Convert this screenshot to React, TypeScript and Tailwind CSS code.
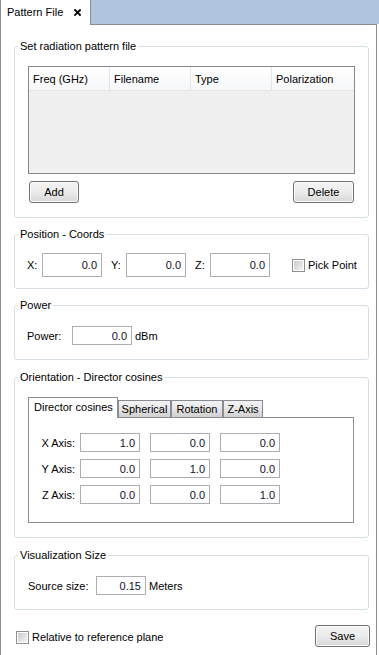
import type { ReactNode } from 'react';

// Group box in the Windows 7 style: light rounded border with the title set into it
function Group({ title, className, children }: { title: string; className?: string; children: ReactNode }) {
  return (
    <fieldset className={`rounded-[3px] border border-[#d5dfe5] p-0 m-0 min-w-0 ${className ?? ''}`}>
      <legend className="ml-[3px] px-[2px] h-[14px] leading-[14px]">{title}</legend>
      {children}
    </fieldset>
  );
}

function Field({ value, w = 'w-[60px]', h = 'h-[19px]' }: { value: string; w?: string; h?: string }) {
  return (
    <div className={`${w} ${h} shrink-0 border border-[#abadb3] bg-white flex items-center justify-end pr-[4px] text-[#10102a]`}>
      {value}
    </div>
  );
}

function Button({ label, w }: { label: string; w: string }) {
  return (
    <div
      className={`${w} h-[22px] shrink-0 rounded-[3px] border border-[#707070] bg-gradient-to-b from-[#f4f4f4] via-[#ebebeb] to-[#d8d8d8] flex items-center justify-center shadow-[inset_0_0_0_1px_#fbfbfb]`}
    >
      {label}
    </div>
  );
}

function Checkbox() {
  return (
    <div className="w-[13px] h-[13px] shrink-0 border border-[#8e8f8f] bg-white p-px">
      <div className="w-full h-full bg-gradient-to-br from-[#cbcbcb] to-[#f3f3f3]" />
    </div>
  );
}

export default function App() {
  const axes = [
    { label: 'X Axis:', values: ['1.0', '0.0', '0.0'] },
    { label: 'Y Axis:', values: ['0.0', '1.0', '0.0'] },
    { label: 'Z Axis:', values: ['0.0', '0.0', '1.0'] },
  ];

  return (
    <div className="w-[379px] h-[655px] bg-white text-[11px] leading-[14px] text-black overflow-hidden font-['Liberation_Sans',Arial,sans-serif]">
      {/* Tab strip */}
      <div className="flex h-[24px]">
        <div className="w-[91px] border-l border-r border-[#898c95] bg-white flex items-center pl-[6px] gap-[11px]">
          <span>Pattern File</span>
          <svg width="7" height="7" viewBox="0 0 7 7" className="mt-px">
            <path d="M1 1 L6 6 M6 1 L1 6" stroke="#000" strokeWidth="1.8" strokeLinecap="square" />
          </svg>
        </div>
        <div className="flex-1 bg-[#b0c4de]" />
      </div>

      {/* Panel */}
      <div className="w-[377px] h-[631px] border-l border-r border-[#898c95] flex flex-col">
        <div className="flex h-px shrink-0">
          <div className="w-[89px]" />
          <div className="flex-1 bg-[#898c95]" />
        </div>

        <div className="pl-[13px] pr-[7px] pt-[14px] flex flex-col">
          {/* Set radiation pattern file */}
          <Group title="Set radiation pattern file" className="pt-[13px] pb-[14px]">
            <div className="ml-[13px] w-[327px] h-[108px] border border-[#828790] bg-[#f0f0f0] flex flex-col">
              <div className="flex h-[24px] bg-gradient-to-b from-white to-[#f6f7f9] border-b border-[#e3e5e8]">
                {['Freq (GHz)', 'Filename', 'Type', 'Polarization'].map((h, i) => (
                  <div
                    key={h}
                    className={`flex items-center pl-[4px] ${i < 3 ? 'w-[81px] border-r border-[#e3e5e8]' : 'flex-1'}`}
                  >
                    {h}
                  </div>
                ))}
              </div>
            </div>
            <div className="mt-[7px] pl-[14px] pr-[14px] flex justify-between">
              <Button label="Add" w="w-[50px]" />
              <Button label="Delete" w="w-[61px]" />
            </div>
          </Group>

          {/* Position */}
          <Group title="Position - Coords" className="mt-[9px] pt-[12px] pb-[11px]">
            <div className="flex items-center pl-[12px]">
              <span className="w-[15px]">X:</span>
              <Field value="0.0" h="h-[24px]" />
              <span className="w-[15px] ml-[9px]">Y:</span>
              <Field value="0.0" h="h-[24px]" />
              <span className="w-[15px] ml-[9px]">Z:</span>
              <Field value="0.0" h="h-[24px]" />
              <div className="ml-[22px]">
                <Checkbox />
              </div>
              <span className="ml-[3px]">Pick Point</span>
            </div>
          </Group>

          {/* Power */}
          <Group title="Power" className="mt-[9px] pt-[14px] pb-[14px]">
            <div className="flex items-center pl-[12px]">
              <span className="w-[45px]">Power:</span>
              <Field value="0.0" />
              <span className="ml-[3px]">dBm</span>
            </div>
          </Group>

          {/* Orientation */}
          <Group title="Orientation - Director cosines" className="mt-[10px] pt-[13px] pb-[14px]">
            <div className="ml-[13px] w-[326px]">
              <div className="flex items-end h-[20px]">
                <div className="w-[90px] h-[21px] -mb-px relative z-10 bg-white border border-b-0 border-[#898c95] flex items-center pl-[5px] pb-[2px]">
                  Director cosines
                </div>
                {[
                  { t: 'Spherical', w: 'w-[53px]' },
                  { t: 'Rotation', w: 'w-[52px]' },
                  { t: 'Z-Axis', w: 'w-[40px]' },
                ].map((tab) => (
                  <div
                    key={tab.t}
                    className={`${tab.w} h-[17px] border border-b-0 border-[#898c95] bg-gradient-to-b from-[#f3f3f3] via-[#e6e6e6] to-[#cfcfcf] flex items-center justify-center`}
                  >
                    {tab.t}
                  </div>
                ))}
              </div>
              <div className="h-[106px] border border-[#898c95] bg-white pt-[15px] pl-[5px] flex flex-col gap-[7px]">
                {axes.map((row) => (
                  <div key={row.label} className="flex items-center">
                    <span className="w-[41px] text-right">{row.label}</span>
                    <div className="ml-[5px] flex gap-[10px]">
                      {row.values.map((v, i) => (
                        <Field key={i} value={v} />
                      ))}
                    </div>
                  </div>
                ))}
              </div>
            </div>
          </Group>

          {/* Visualization size */}
          <Group title="Visualization Size" className="mt-[10px] pt-[14px] pb-[14px]">
            <div className="flex items-center pl-[13px]">
              <span className="w-[68px]">Source size:</span>
              <Field value="0.15" w="w-[50px]" />
              <span className="ml-[3px]">Meters</span>
            </div>
          </Group>
        </div>

        {/* Footer */}
        <div className="mt-[15px] pl-[15px] pr-[6px] flex items-start justify-between">
          <div className="flex items-center mt-[5px]">
            <Checkbox />
            <span className="ml-[3px]">Relative to reference plane</span>
          </div>
          <Button label="Save" w="w-[55px]" />
        </div>
      </div>
    </div>
  );
}
